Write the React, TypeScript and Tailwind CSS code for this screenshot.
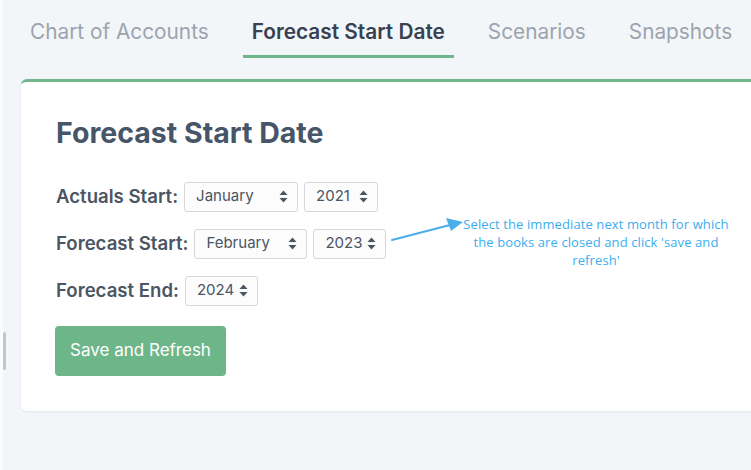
import React from 'react';

const tabs = ['Chart of Accounts', 'Forecast Start Date', 'Scenarios', 'Snapshots'];

function SortIcon() {
  return (
    <svg width="9" height="13" viewBox="0 0 9 13" className="shrink-0">
      <path d="M4.5 0.5 L8.5 5 H0.5 Z" fill="#4b5563" />
      <path d="M4.5 12.5 L8.5 8 H0.5 Z" fill="#4b5563" />
    </svg>
  );
}

function FakeSelect({ value, width }: { value: string; width: string }) {
  return (
    <div
      className={`${width} h-[30px] flex items-center justify-between pl-[11px] pr-[9px] bg-[#fcfcfd] border border-[#d4d8de] rounded-[3px] text-[15px] text-[#4b5563]`}
    >
      <span>{value}</span>
      <SortIcon />
    </div>
  );
}

function Row({ label, children }: { label: string; children: React.ReactNode }) {
  return (
    <div className="flex items-center gap-[6px] h-[31px]">
      <span className="text-[18.6px] font-semibold text-[#4b5563]">{label}</span>
      {children}
    </div>
  );
}

export default function App() {
  return (
    <div className="relative w-[751px] h-[470px] overflow-hidden bg-[#f3f6f9] flex font-['Inter',sans-serif]">
      <div className="w-[3px] bg-[#fafbfc] shrink-0" />
      <div className="absolute left-[3px] top-[332px] w-[3px] h-[38px] bg-[#c3c6cb] rounded-sm" />

      <div className="flex-1 pl-[18px] pt-[18px]">
        <nav className="flex gap-[25px]">
          {tabs.map((t, i) => (
            <div
              key={t}
              className={`px-[9px] pb-[9px] text-[20.8px] leading-[28px] whitespace-nowrap border-b-[3px] ${
                i === 1
                  ? 'font-semibold text-[#374151] border-[#6db58a]'
                  : 'text-[#9ca3af] border-transparent'
              }`}
            >
              {t}
            </div>
          ))}
        </nav>

        <section className="mt-[21px] w-[740px] h-[332px] bg-white rounded-tl-[6px] rounded-bl-[6px] border-t-[3px] border-[#72b68c] shadow-[0_1px_3px_rgba(15,23,42,0.08)] pl-[35px] pt-[33px]">
          <h1 className="text-[28.5px] leading-[36px] font-bold text-[#475569]">
            Forecast Start Date
          </h1>
          <div className="mt-[30px] flex flex-col gap-[16px]">
            <Row label="Actuals Start:">
              <FakeSelect value="January" width="w-[114px]" />
              <FakeSelect value="2021" width="w-[74px]" />
            </Row>
            <Row label="Forecast Start:">
              <FakeSelect value="February" width="w-[113px]" />
              <FakeSelect value="2023" width="w-[73px]" />
            </Row>
            <Row label="Forecast End:">
              <FakeSelect value="2024" width="w-[73px]" />
            </Row>
          </div>
          <button className="mt-[20px] -ml-[1px] w-[171px] h-[50px] rounded-[4px] bg-[#6db68a] text-white text-[17px]">
            Save and Refresh
          </button>
        </section>
      </div>

      <svg className="absolute left-[388px] top-[214px]" width="80" height="32" viewBox="0 0 80 32">
        <path d="M4 26 L62 11" stroke="#4aaee8" strokeWidth="2" fill="none" strokeLinecap="round" />
        <path d="M75 8 L58 4 L63 17 Z" fill="#4aaee8" />
      </svg>

      <div className="absolute left-[446px] top-[215px] w-[300px] text-center text-[13px] leading-[18px] tracking-[0.1px] font-medium text-[#3aaeee] font-['Open_Sans',sans-serif]">
        Select the immediate next month for which
        <br />
        the books are closed and click 'save and
        <br />
        refresh'
      </div>
    </div>
  );
}
